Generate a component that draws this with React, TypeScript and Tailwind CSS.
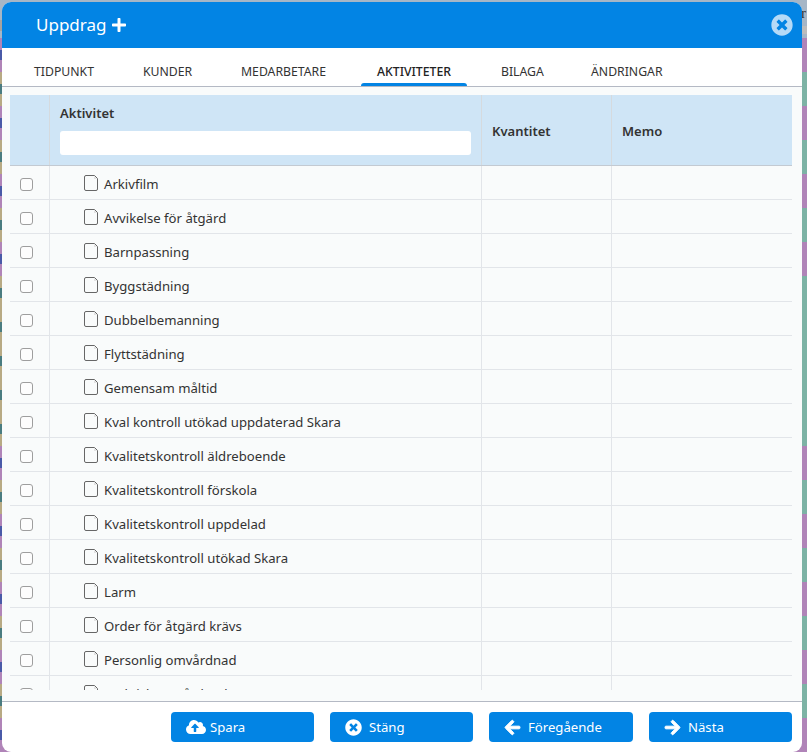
import * as React from 'react';
import { FaPlus, FaTimesCircle, FaCloudUploadAlt, FaArrowLeft, FaArrowRight } from 'react-icons/fa';

const activities = [
  'Arkivfilm',
  'Avvikelse för åtgärd',
  'Barnpassning',
  'Byggstädning',
  'Dubbelbemanning',
  'Flyttstädning',
  'Gemensam måltid',
  'Kval kontroll utökad uppdaterad Skara',
  'Kvalitetskontroll äldreboende',
  'Kvalitetskontroll förskola',
  'Kvalitetskontroll uppdelad',
  'Kvalitetskontroll utökad Skara',
  'Larm',
  'Order för åtgärd krävs',
  'Personlig omvårdnad',
  'Praktisk omvårdnad',
];

const tabs = [
  { label: 'TIDPUNKT', width: 'w-[91px]' },
  { label: 'KUNDER', width: 'w-[80px]' },
  { label: 'MEDARBETARE', width: 'w-[118px]' },
  { label: 'AKTIVITETER', width: 'w-[106px]' },
  { label: 'BILAGA', width: 'w-[72px]' },
  { label: 'ÄNDRINGAR', width: 'w-[108px]' },
];

// stripes of the page behind the dialog, true = purple row
const stripes = [true, false, true, false, true, false, true, false, false, false, false, false, true, false, true, false, true, false, true, false, true];

function DocIcon() {
  return (
    <svg width="14" height="16" viewBox="0 0 14 16" className="mt-[-4px] shrink-0">
      <path d="M10 1 L13 4 L10 4 Z" fill="#e2e2e2" />
      <path d="M2 .5 H10.5 L13.5 3.5 V14 A1.5 1.5 0 0 1 12 15.5 H2 A1.5 1.5 0 0 1 .5 14 V2 A1.5 1.5 0 0 1 2 .5 Z" fill="none" stroke="#666" strokeWidth="1" />
    </svg>
  );
}

function FooterButton({ icon, label, className }: { icon: React.ReactNode; label: string; className: string }) {
  return (
    <button className={`flex h-[30px] items-center rounded-[4px] bg-[#0284e4] pl-[15px] text-[13.15px] text-white ${className}`}>
      {icon}
      <span className="pt-[1px]">{label}</span>
    </button>
  );
}

function Backdrop() {
  return (
    <div className="flex h-[752px] w-full">
      <div className="flex w-1/2 flex-col">
        <div className="h-[33px] bg-[#a6b6c6]" />
        <div className="h-[19px] bg-[#a8a39f]" />
        <div className="h-[12px] bg-[#a6b6c6]" />
        {stripes.map((purple, i) => (
          <div key={i} className={`flex h-[34px] shrink-0 items-center ${purple ? 'bg-[#b084b8]' : 'bg-[#b8aa84]'}`}>
            <span className={`h-[10px] w-[2px] ${purple ? 'bg-[#4a5aa8]' : 'bg-[#4a7c80]'}`} />
          </div>
        ))}
      </div>
      <div className="flex w-1/2 flex-col">
        <div className="flex h-[30px] justify-end bg-[#a6b6c6] pr-[1px] font-['Liberation_Serif',serif] text-[15px] leading-[26px] text-[#333]">r</div>
        <div className="h-[24px] bg-[#bcbcbc]" />
        <div className="h-[10px] bg-[#a6b6c6]" />
        {stripes.map((purple, i) => (
          <div key={i} className={`h-[34px] shrink-0 ${purple ? 'bg-[#b084b8]' : 'bg-[#7db3a5]'}`} />
        ))}
      </div>
    </div>
  );
}

export default function App() {
  return (
    <div className="relative h-[752px] w-[807px] overflow-hidden font-['Noto_Sans',sans-serif] text-[#333]">
      <Backdrop />
      <div className="absolute left-[2px] top-[2px] flex h-[750px] w-[800px] flex-col overflow-hidden rounded-[9px] bg-white">
        <div className="flex h-[46px] shrink-0 items-center justify-between bg-[#0284e4] pl-[34px] pr-[9px] text-white">
          <div className="flex items-center gap-[5px] text-[17px]">
            Uppdrag <FaPlus className="text-[16px]" />
          </div>
          <FaTimesCircle className="text-[22px] text-[#b5daf7]" />
        </div>

        <div className="flex h-[39px] shrink-0 gap-[18px] border-b border-[#b4b9c4] pl-[16px]">
          {tabs.map((t) =>
            t.label === 'AKTIVITETER' ? (
              <div key={t.label} className={`relative flex items-center pl-[16px] pt-[10px] text-[12.25px] font-medium text-[#222] ${t.width}`}>
                {t.label}
                <span className="absolute bottom-0 left-0 right-0 h-[3px] rounded-t-[3px] bg-[#0284e4]" />
              </div>
            ) : (
              <div key={t.label} className={`flex items-center pl-[16px] pt-[10px] text-[12.25px] text-[#333] ${t.width}`}>
                {t.label}
              </div>
            ),
          )}
        </div>

        <div className="min-h-0 flex-1 border-b border-[#b4b9c4] bg-[#f9fbfb] pb-[11px] pl-[8px] pr-[10px] pt-[8px]">
          <div className="h-full overflow-hidden">
            <div className="grid h-[71px] grid-cols-[40px_432px_130px_180px] border-b border-[#c3cad2] bg-[#cfe5f6] text-[13px] font-semibold">
              <div className="border-r border-[#d5dade]" />
              <div className="flex flex-col border-r border-[#d5dade] px-[10px] pt-[9px]">
                <span className="leading-[18px]">Aktivitet</span>
                <input className="mt-[9px] h-[24px] w-[411px] rounded-[3px] bg-white" />
              </div>
              <div className="flex items-center border-r border-[#d5dade] px-[10px] pt-[3px]">Kvantitet</div>
              <div className="flex items-center px-[10px] pt-[3px]">Memo</div>
            </div>
            {activities.map((a) => (
              <div key={a} className="grid h-[34px] grid-cols-[40px_432px_130px_180px] border-b border-[#e2e5e9] text-[13.15px]">
                <div className="flex items-center border-r border-[#e2e5e9] pl-[10px] pt-[3px]">
                  <input type="checkbox" className="h-[13px] w-[13px] appearance-none rounded-[3px] border border-[#9e9e9e] bg-[#fdfdfd]" />
                </div>
                <div className="flex items-center gap-[6px] border-r border-[#e2e5e9] pl-[34px] pt-[5px]">
                  <DocIcon />
                  <span>{a}</span>
                </div>
                <div className="border-r border-[#e2e5e9]" />
                <div />
              </div>
            ))}
          </div>
        </div>

        <div className="flex h-[50px] shrink-0 gap-[16px] pb-[10px] pl-[169px] pr-[10px] pt-[10px]">
          <FooterButton icon={<FaCloudUploadAlt className="text-[20px]" />} label="Spara" className="w-[143px] gap-[4px]" />
          <FooterButton icon={<FaTimesCircle className="text-[17px]" />} label="Stäng" className="w-[143px] gap-[7px]" />
          <FooterButton icon={<FaArrowLeft className="text-[17px]" stroke="currentColor" strokeWidth={30} />} label="Föregående" className="w-[144px] gap-[7px]" />
          <FooterButton icon={<FaArrowRight className="text-[17px]" stroke="currentColor" strokeWidth={30} />} label="Nästa" className="w-[143px] gap-[7px]" />
        </div>
      </div>
    </div>
  );
}
